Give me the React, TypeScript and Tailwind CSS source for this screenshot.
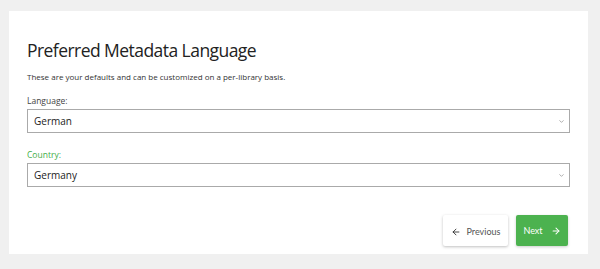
import { FC } from 'react';
import { ArrowLeft, ArrowRight, ChevronDown } from 'lucide-react';

const Field: FC<{ label: string; value: string; active?: boolean }> = ({ label, value, active }) => (
  <div>
    <div className={`text-[8.5px] leading-[12px] ${active ? 'text-[#3fae49]' : 'text-[#444]'}`}>{label}</div>
    <div className="mt-[2px] h-[24px] border border-[#aaaaaa] flex items-center justify-between pl-[6px] pr-[4px]">
      <span className="text-[10px] text-[#222]">{value}</span>
      <ChevronDown className="w-[7px] h-[7px] text-[#777]" strokeWidth={2} />
    </div>
  </div>
);

const App: FC = () => {
  return (
    <div className="w-[600px] h-[269px] bg-[#f0f0f0] pt-[11px] pl-[9px]" style={{ fontFamily: '"Open Sans", sans-serif' }}>
      <div className="w-[579px] h-[243px] bg-white px-[18px] pt-[25px]">
        <h1 className="text-[17.5px] leading-[28px] tracking-[-0.55px] text-[#222] font-normal">Preferred Metadata Language</h1>
        <p className="mt-[7px] text-[8px] leading-[12px] text-[#333]">
          These are your defaults and can be customized on a per-library basis.
        </p>
        <div className="mt-[12px]">
          <Field label="Language:" value="German" />
        </div>
        <div className="mt-[16px]">
          <Field label="Country:" value="Germany" active />
        </div>
        <div className="mt-[28px] flex justify-end gap-[8px] pr-[2px]" style={{ fontFamily: 'Lato, sans-serif' }}>
          <button className="w-[65px] h-[31px] bg-white rounded-[2px] shadow-[0_1px_3px_rgba(0,0,0,0.25)] flex items-center justify-center gap-[6px] text-[9px] text-[#555] pt-[2px]">
            <ArrowLeft className="w-[10px] h-[10px] text-[#222]" strokeWidth={2} />
            Previous
          </button>
          <button className="w-[52px] h-[31px] bg-[#4cb24f] rounded-[2px] shadow-[0_1px_3px_rgba(0,0,0,0.2)] flex items-center justify-center gap-[8px] text-[9px] text-white">
            Next
            <ArrowRight className="w-[10px] h-[10px]" strokeWidth={2.5} />
          </button>
        </div>
      </div>
    </div>
  );
};

export default App;
